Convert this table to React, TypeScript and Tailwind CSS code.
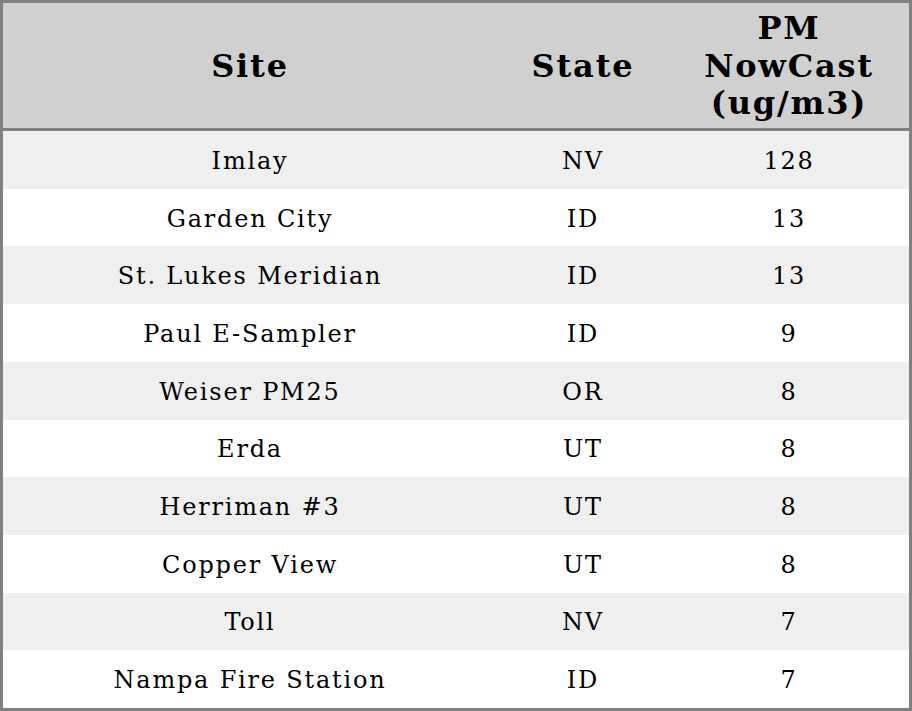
import React from 'react';

const ROWS = [
  ['Imlay', 'NV', '128'],
  ['Garden City', 'ID', '13'],
  ['St. Lukes Meridian', 'ID', '13'],
  ['Paul E-Sampler', 'ID', '9'],
  ['Weiser PM25', 'OR', '8'],
  ['Erda', 'UT', '8'],
  ['Herriman #3', 'UT', '8'],
  ['Copper View', 'UT', '8'],
  ['Toll', 'NV', '7'],
  ['Nampa Fire Station', 'ID', '7'],
];

const cols = 'grid grid-cols-[494px_172px_1fr]';

export default function App() {
  return (
    <div className="w-[912px] h-[711px] border-[3px] border-[#808080] flex flex-col bg-white text-black font-['DejaVu_Serif',serif]">
      {/* header */}
      <div className={`${cols} h-[128px] shrink-0 bg-[#d0d0d0] border-b-[3px] border-[#808080] font-bold text-[32px] leading-[37.5px] tracking-[1.8px]`}>
        <div className="flex items-center justify-center text-center pt-[2px]">Site</div>
        <div className="flex items-center justify-center text-center pt-[2px]">State</div>
        <div className="flex items-center justify-center text-center pt-[2px]">
          PM
          <br />
          NowCast
          <br />
          (ug/m3)
        </div>
      </div>

      <div className="flex-1 grid grid-rows-10">
        {ROWS.map((r, i) => (
          <div
            key={i}
            className={`${cols} items-center text-center text-[24px] tracking-[1.8px] pt-[2px] ${i % 2 === 0 ? 'bg-[#efefef]' : 'bg-white'}`}
          >
            <div>{r[0]}</div>
            <div>{r[1]}</div>
            <div>{r[2]}</div>
          </div>
        ))}
      </div>
    </div>
  );
}
